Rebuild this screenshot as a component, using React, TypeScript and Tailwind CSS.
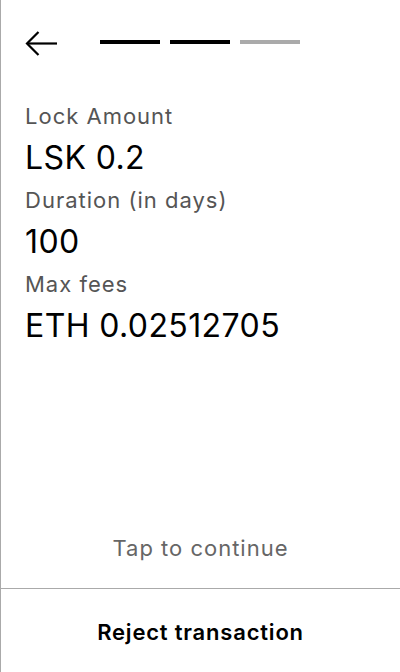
import React from 'react';

const fields = [
  { label: 'Lock Amount', value: 'LSK 0.2' },
  { label: 'Duration (in days)', value: '100' },
  { label: 'Max fees', value: 'ETH 0.02512705' },
];

const steps = ['bg-black', 'bg-black', 'bg-[#aaaaaa]'];

const App: React.FC = () => {
  return (
    <div className="w-[400px] h-[672px] flex flex-col bg-white border-l border-[#aaaaaa] font-['Inter',sans-serif] text-black">
      {/* header: back arrow + step progress */}
      <div className="flex items-center pt-[30px] pl-[23px]">
        <button className="w-[34px] h-[28px] flex items-center justify-center">
          <svg width="34" height="28" viewBox="0 0 34 28" fill="none" stroke="black" strokeWidth="2.2">
            <path d="M33 13.5H3" />
            <path d="M14.5 2L3 13.5L14.5 25" />
          </svg>
        </button>
        <div className="flex gap-[10px] ml-[42px] -mt-[4px]">
          {steps.map((c, i) => (
            <div key={i} className={`w-[60px] h-[4px] ${c}`} />
          ))}
        </div>
      </div>

      {/* transaction details */}
      <div className="flex flex-col px-[24px] mt-[44px]">
        {fields.map(f => (
          <div key={f.label} className="flex flex-col mb-[8px]">
            <span className="text-[22px] leading-[28px] tracking-[1px] text-[#555555] mb-[8px]">{f.label}</span>
            <span className="text-[32px] leading-[40px] tracking-[0.4px] text-black">{f.value}</span>
          </div>
        ))}
      </div>

      <div className="flex-1" />

      <div className="flex justify-center pb-[26px]">
        <span className="text-[22px] leading-[28px] tracking-[1px] text-[#666666]">Tap to continue</span>
      </div>

      <div className="border-t border-[#aaaaaa] h-[84px] flex justify-center pt-[29px]">
        <span className="text-[22px] leading-[28px] tracking-[0.8px] font-semibold text-black">Reject transaction</span>
      </div>
    </div>
  );
};

export default App;
